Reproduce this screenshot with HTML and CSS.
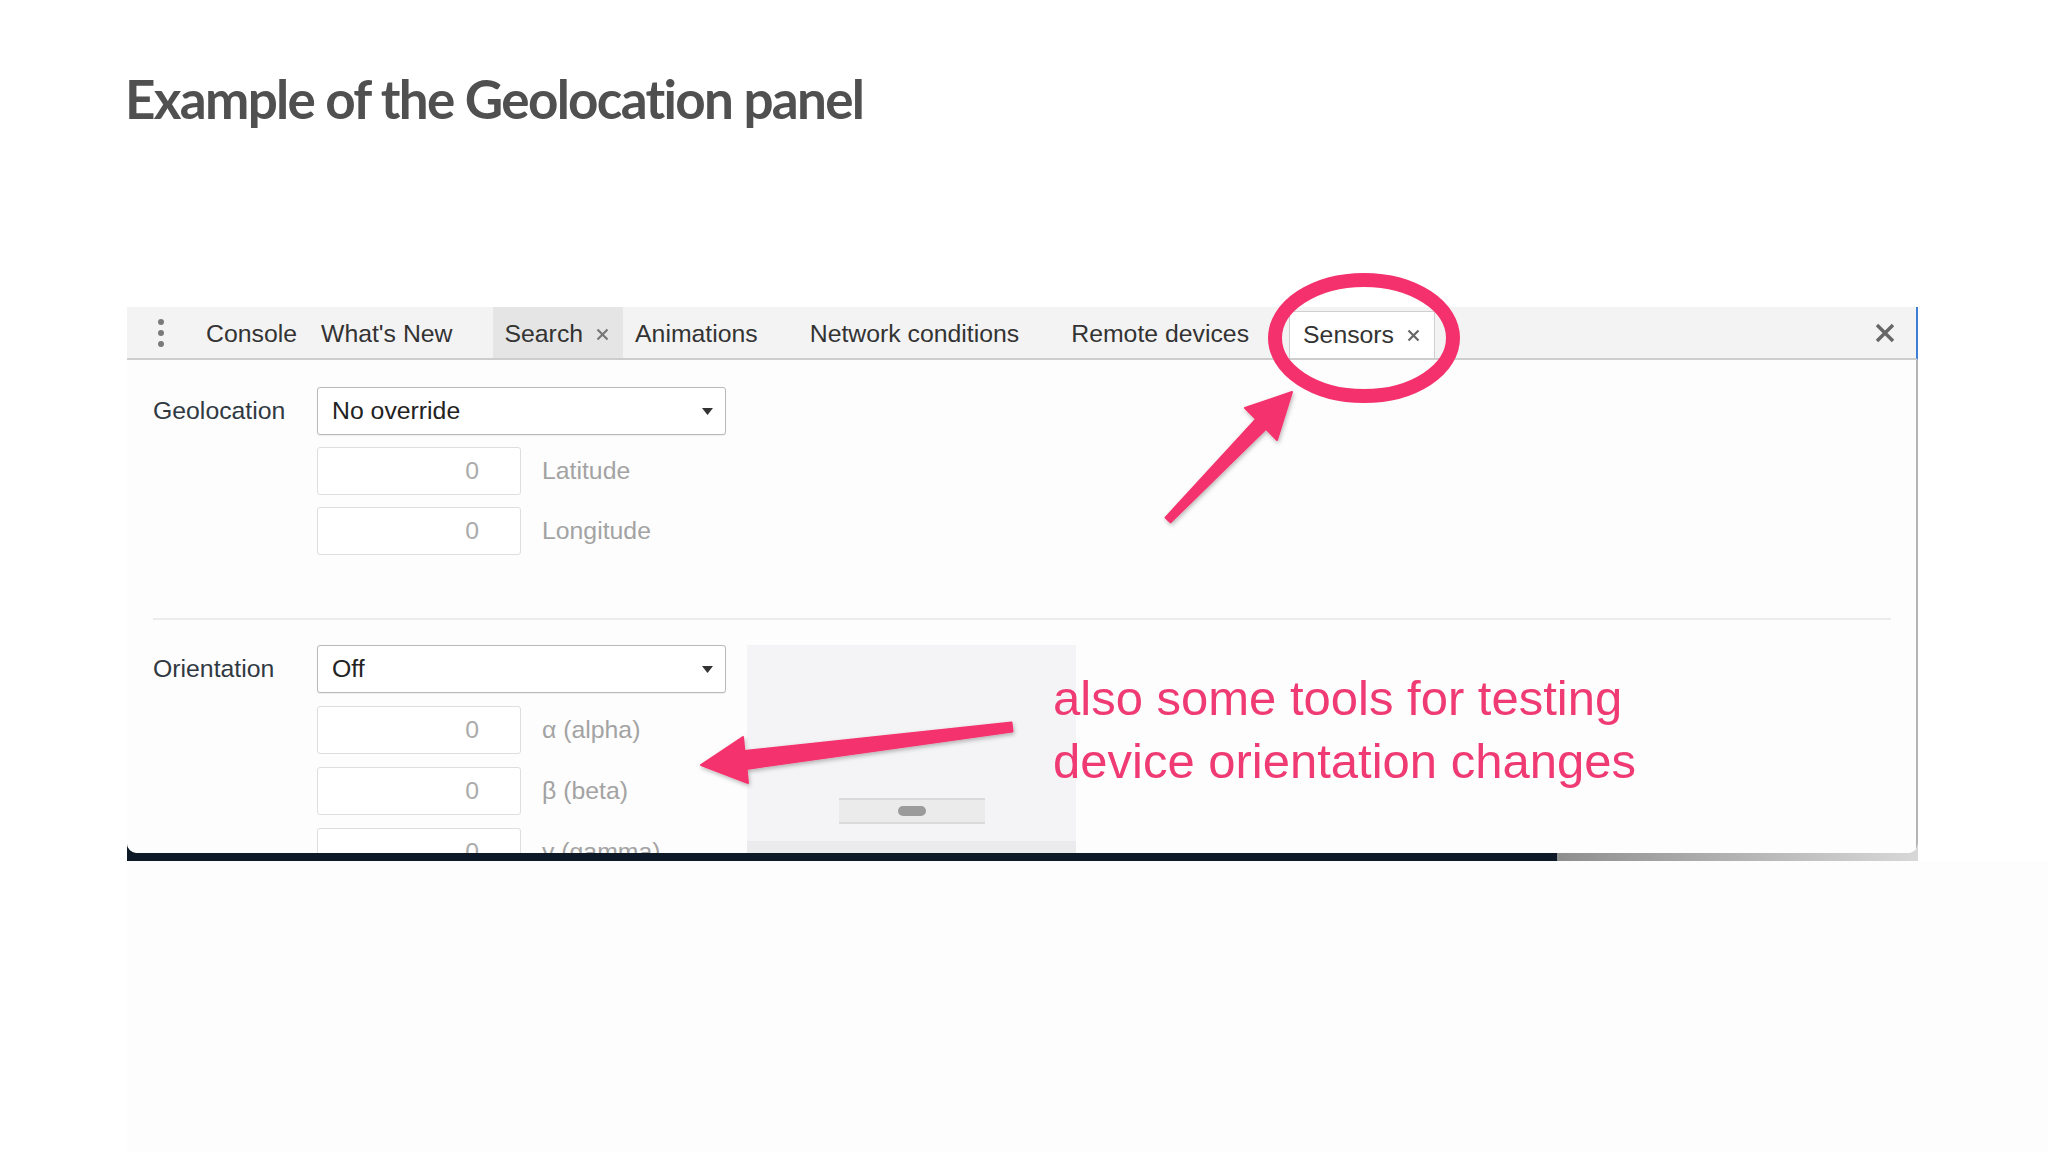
FILE: index.html
```html
<!DOCTYPE html>
<html lang="en">
<head>
<meta charset="utf-8">
<title>Example of the Geolocation panel</title>
<link rel="stylesheet" href="styles.css">
</head>
<body>
<h1 class="title">Example of the Geolocation panel</h1>

<div class="shot">
  <div class="devtools">
    <div class="toolbar">
      <div class="kebab">
        <svg width="8" height="30" viewBox="0 0 8 30"><circle cx="4" cy="4" r="3" fill="#7a7a7a"/><circle cx="4" cy="15" r="3" fill="#7a7a7a"/><circle cx="4" cy="26" r="3" fill="#7a7a7a"/></svg>
      </div>
      <div class="tab">Console</div>
      <div class="tab">What's New<span class="x"></span></div>
      <div class="tab tab-hover">Search<span class="x shown"><svg width="13" height="13" viewBox="0 0 13 13"><path d="M1.5 1.5L11.5 11.5M11.5 1.5L1.5 11.5" stroke="#777" stroke-width="2.2"/></svg></span></div>
      <div class="tab">Animations<span class="x"></span></div>
      <div class="tab">Network conditions<span class="x"></span></div>
      <div class="tab">Remote devices<span class="x"></span></div>
      <div class="tab tab-selected">Sensors<span class="x shown"><svg width="13" height="13" viewBox="0 0 13 13"><path d="M1.5 1.5L11.5 11.5M11.5 1.5L1.5 11.5" stroke="#666" stroke-width="2.2"/></svg></span></div>
      <div class="close-panel">
        <svg width="20" height="20" viewBox="0 0 20 20"><path d="M2 2L18 18M18 2L2 18" stroke="#666" stroke-width="3.4"/></svg>
      </div>
    </div>

    <div class="panel-body">
      <div class="row">
        <div class="label">Geolocation</div>
        <div class="fields">
          <div class="select"><span>No override</span><svg width="11" height="7" viewBox="0 0 11 7"><path d="M0 0H11L5.5 7Z" fill="#333"/></svg></div>
          <div class="num-row"><div class="num">0</div><span class="num-label">Latitude</span></div>
          <div class="num-row"><div class="num">0</div><span class="num-label">Longitude</span></div>
        </div>
      </div>

      <div class="sep"></div>

      <div class="row">
        <div class="label">Orientation</div>
        <div class="fields fields-orient">
          <div class="select"><span>Off</span><svg width="11" height="7" viewBox="0 0 11 7"><path d="M0 0H11L5.5 7Z" fill="#333"/></svg></div>
          <div class="num-row"><div class="num">0</div><span class="num-label">α (alpha)</span></div>
          <div class="num-row"><div class="num">0</div><span class="num-label">β (beta)</span></div>
          <div class="num-row"><div class="num">0</div><span class="num-label">γ (gamma)</span></div>
        </div>
        <div class="preview">
          <div class="device-bar"><span class="pill"></span></div>
          <div class="preview-band"></div>
        </div>
      </div>
    </div>
  </div>
</div>
<div class="below"></div>

<div class="annotations">
  <svg class="marks" width="2048" height="1152" viewBox="0 0 2048 1152">
    <defs>
      <filter id="sh" x="-20%" y="-20%" width="140%" height="140%">
        <feDropShadow dx="1" dy="2" stdDeviation="2" flood-color="#000" flood-opacity="0.28"/>
      </filter>
    </defs>
    <ellipse cx="1364" cy="338" rx="89" ry="58" fill="none" stroke="#f4316d" stroke-width="14"/>
    <polygon filter="url(#sh)" fill="#f4316d" stroke="#f4316d" stroke-width="2" stroke-linejoin="round"
      points="1165.5,517.6 1256,419.1 1245,408 1292,392 1277,440 1266,428.9 1170.5,522.4"/>
    <polygon filter="url(#sh)" fill="#f4316d" stroke="#f4316d" stroke-width="2" stroke-linejoin="round"
      points="1011.5,722.5 744.4,751.1 743,737 701,765 748,783 746.6,768.9 1012.5,731.5"/>
  </svg>
  <p class="note">also some tools for testing<br>device orientation changes</p>
</div>
</body>
</html>
```
FILE: styles.css
```css
* { box-sizing: border-box; }
html, body { margin: 0; }
body {
  width: 2048px;
  height: 1152px;
  background: #ffffff;
  position: relative;
  overflow: hidden;
  font-family: "Liberation Sans", Arial, sans-serif;
}

.title {
  margin: 0;
  padding: 72px 0 0 125px;
  font-family: Lato, "Open Sans", sans-serif;
  font-weight: 700;
  font-size: 53px;
  line-height: 54px;
  letter-spacing: -1.7px;
  color: #505050;
}

.shot {
  margin: 181px 0 0 127px;
  width: 1791px;
  padding-bottom: 8px;
  background: linear-gradient(to right, #0d1927 0, #0d1927 1430px, #8e8e8e 1430px, #d8d8d8 100%);
}

.devtools {
  height: 546px;
  background: #fdfdfd;
  border-radius: 0 0 10px 10px;
  overflow: hidden;
  display: flex;
  flex-direction: column;
}

.toolbar {
  height: 53px;
  flex: none;
  display: flex;
  align-items: stretch;
  background: #f3f3f3;
  border-bottom: 2px solid #cdcdcd;
  border-right: 2px solid #3d7fd6;
  font-size: 24.8px;
  color: #333;
}

.kebab {
  width: 67px;
  display: flex;
  align-items: center;
  justify-content: center;
}

.tab {
  display: flex;
  align-items: center;
  padding: 3px 12px 0;
  white-space: nowrap;
}

.tab .x {
  margin-left: 10px;
  width: 18px;
  display: flex;
  justify-content: center;
  visibility: hidden;
}

.tab .x.shown { visibility: visible; }

.tab-hover { background: #e5e5e5; }

.tab-selected {
  background: #ffffff;
  border: 1px solid #cfcfcf;
  border-bottom: none;
  margin-top: 4px;
  padding: 0 12px 0 13px;
}

.close-panel {
  margin-left: auto;
  width: 62px;
  display: flex;
  align-items: center;
  justify-content: center;
}

.panel-body {
  flex: 1;
  padding: 27px 25px 0 26px;
  border-right: 2px solid #b4b4b4;
  background: #fdfdfd;
}

.row {
  display: flex;
  align-items: flex-start;
}

.label {
  width: 164px;
  height: 48px;
  display: flex;
  align-items: center;
  font-size: 24.8px;
  color: #303942;
}

.fields {
  width: 409px;
  display: flex;
  flex-direction: column;
  gap: 12px;
}

.fields-orient { gap: 13px; }

.select {
  height: 48px;
  border: 1px solid #b9b9b9;
  border-radius: 3px;
  background: #ffffff;
  display: flex;
  align-items: center;
  justify-content: space-between;
  padding: 0 12px 0 14px;
  font-size: 24.8px;
  color: #222;
  box-shadow: 0 1px 1px rgba(0, 0, 0, 0.06);
}

.num-row {
  display: flex;
  align-items: center;
  gap: 21px;
}

.num {
  width: 204px;
  height: 48px;
  border: 1px solid #dedede;
  border-radius: 3px;
  background: #ffffff;
  text-align: right;
  padding-right: 41px;
  line-height: 46px;
  font-size: 24.8px;
  color: #ababab;
}

.num-label {
  font-size: 24.8px;
  color: #a3a3a3;
}

.sep {
  height: 2px;
  background: #ececec;
  margin: 63px 0 25px;
}

.preview {
  margin-left: 21px;
  width: 329px;
  height: 230px;
  background: #f4f4f6;
  padding-top: 153px;
  display: flex;
  flex-direction: column;
  align-items: center;
}

.device-bar {
  width: 146px;
  height: 26px;
  background: #ebebeb;
  border-top: 2px solid #dadada;
  border-bottom: 2px solid #dadada;
  display: flex;
  align-items: center;
  justify-content: center;
}

.pill {
  width: 28px;
  height: 10px;
  border-radius: 5px;
  background: #9b9b9b;
}

.preview-band {
  margin-top: 17px;
  width: 100%;
  height: 30px;
  background: #ebebed;
}

.below {
  margin-left: 127px;
  height: 291px;
  background: #fdfdfd;
}

.annotations {
  position: absolute;
  left: 0;
  top: 0;
  width: 2048px;
  height: 1152px;
  pointer-events: none;
}

.marks {
  position: absolute;
  left: 0;
  top: 0;
}

.note {
  position: absolute;
  left: 1053px;
  top: 667px;
  margin: 0;
  font-family: "Liberation Sans", Arial, sans-serif;
  font-size: 49px;
  line-height: 63px;
  color: #ef3a73;
  white-space: nowrap;
}
```
